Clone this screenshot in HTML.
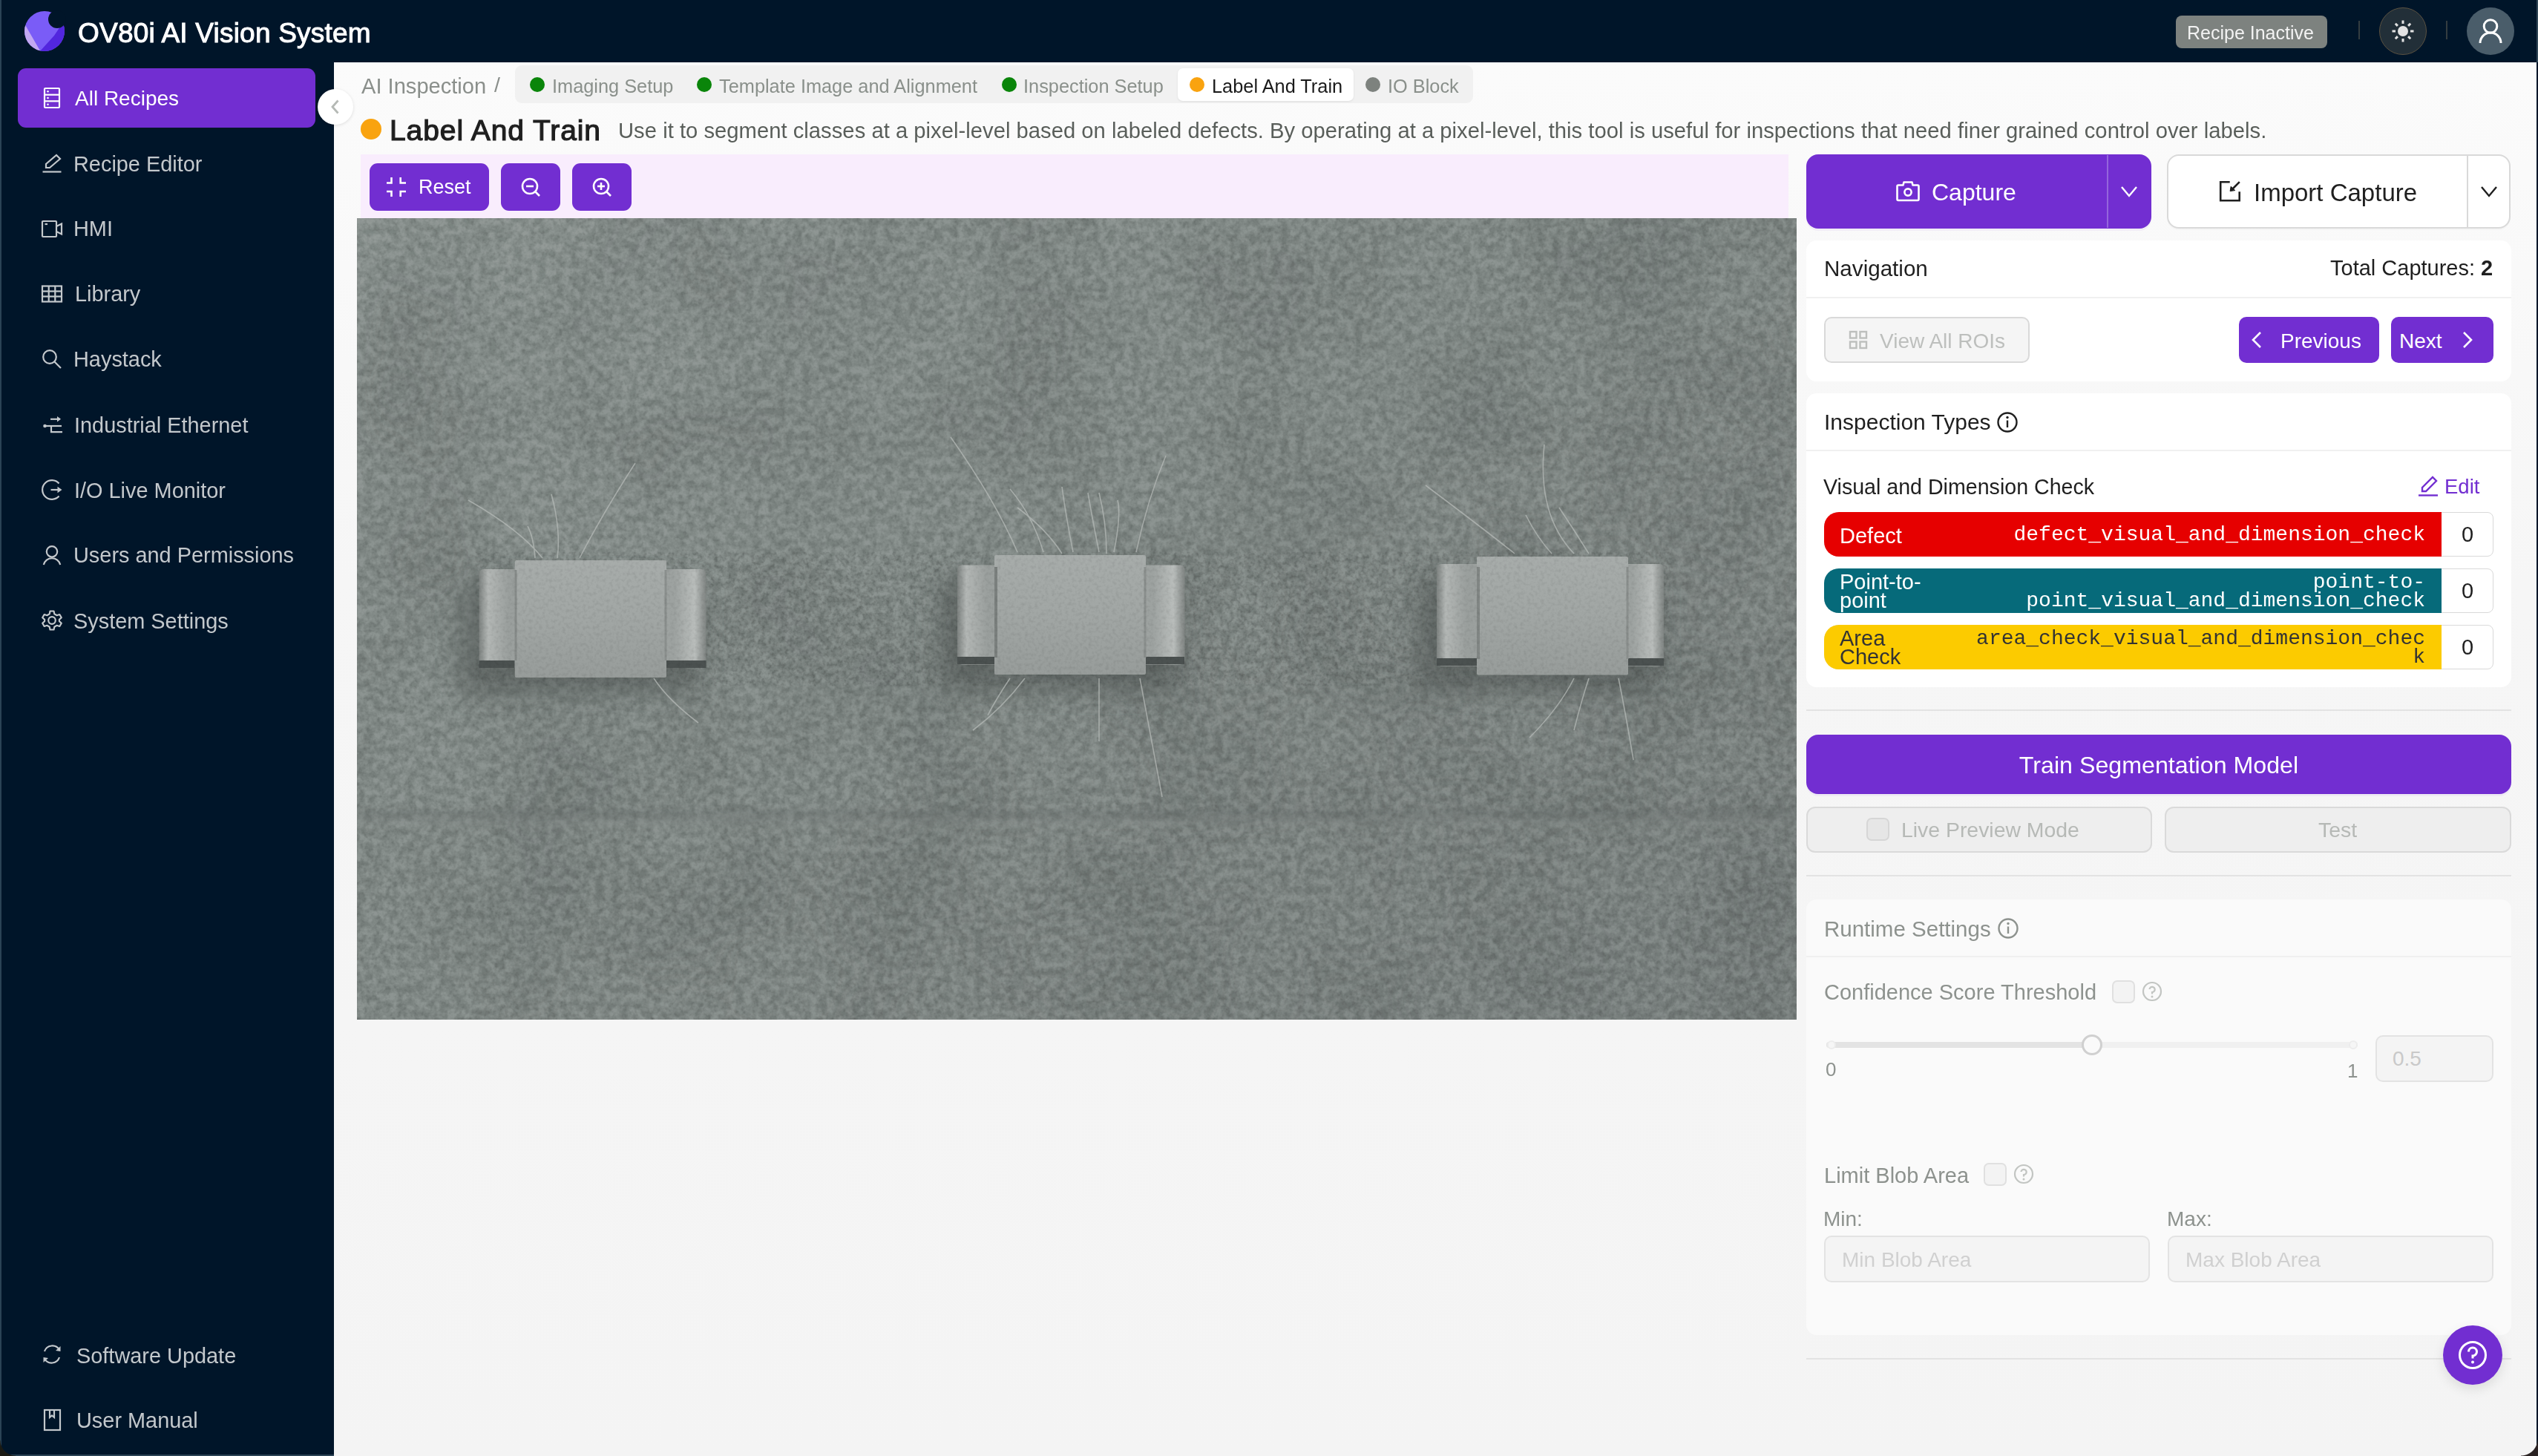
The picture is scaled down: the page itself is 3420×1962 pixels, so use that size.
<!DOCTYPE html>
<html><head><meta charset="utf-8">
<style>
*{margin:0;padding:0;box-sizing:border-box}
html,body{width:3420px;height:1962px;overflow:hidden;background:#001529;font-family:"Liberation Sans",sans-serif}
.a{position:absolute}
.t{position:absolute;line-height:1;white-space:nowrap}
.nav{color:#c3c8cc;font-size:28.9px}
.ic{position:absolute;overflow:visible}
.ic{fill:none;stroke:#c3c8cc;stroke-width:2.2}
.tab{position:absolute;line-height:1;white-space:nowrap;font-size:25.35px;color:#8a908b}
.dot{position:absolute;width:20px;height:20px;border-radius:50%}
.card{position:absolute;background:#fff;border-radius:14px}
.btn{position:absolute;background:#722ed1;border-radius:10px}
.w{color:#fff}
.mono{font-family:"Liberation Mono",monospace}
</style></head><body>
<!-- backgrounds -->
<div class="a" style="left:0;top:0;width:3420px;height:84px;background:#001529"></div>
<div class="a" style="left:0;top:84px;width:450px;height:1878px;background:#001529"></div>
<div class="a" style="left:450px;top:84px;width:2968px;height:1878px;background:linear-gradient(#fbfbfb,#f6f6f6 700px,#f4f4f4)"></div>
<div class="a" style="left:0;top:0;width:2px;height:1962px;background:#2b4355"></div>
<div class="a" style="left:0;top:1960px;width:450px;height:2px;background:#2b4355"></div>
<div class="a" style="left:3418px;top:0;width:2px;height:84px;background:#2f4656"></div>

<!-- header -->
<svg class="ic" style="left:33px;top:14px" width="56" height="56" viewBox="0 0 56 56">
 <defs><clipPath id="lc"><circle cx="27" cy="28" r="27"/></clipPath></defs>
 <g clip-path="url(#lc)" style="stroke:none">
  <rect x="0" y="0" width="56" height="56" style="fill:#7a5cf7;stroke:none"/>
  <polygon points="40,34 56,10 56,56 20,56" style="fill:#5226de;stroke:none"/>
  <polygon points="0,18 22,56 0,56" style="fill:#c3a8f2;stroke:none"/>
 </g>
 <circle cx="44" cy="12" r="12" style="fill:#001529;stroke:none"/>
</svg>
<div class="t" style="left:105px;top:26px;font-size:37px;color:#fff;-webkit-text-stroke:1px #fff;letter-spacing:0.22px">OV80i AI Vision System</div>

<div class="a" style="left:2932px;top:21px;width:204px;height:44px;background:#7d827f;border-radius:8px"></div>
<div class="t" style="left:2947px;top:32px;font-size:25px;color:#f2f2f2">Recipe Inactive</div>
<div class="a" style="left:3178px;top:28px;width:2px;height:25px;background:#343d40"></div>
<div class="a" style="left:3206px;top:10px;width:64px;height:64px;border-radius:50%;background:#222f38;border:1.5px solid #5b5241"></div>
<svg class="ic" style="left:3218px;top:22px" width="40" height="40" viewBox="0 0 40 40">
 <circle cx="20" cy="20" r="7" style="fill:#e3e3e3;stroke:none"/>
 <g style="stroke:#e3e3e3;stroke-width:3">
 <line x1="20" y1="5.5" x2="20" y2="10"/><line x1="20" y1="30" x2="20" y2="34.5"/>
 <line x1="5.5" y1="20" x2="10" y2="20"/><line x1="30" y1="20" x2="34.5" y2="20"/>
 <line x1="9.8" y1="9.8" x2="12.9" y2="12.9"/><line x1="27.1" y1="27.1" x2="30.2" y2="30.2"/>
 <line x1="9.8" y1="30.2" x2="12.9" y2="27.1"/><line x1="27.1" y1="12.9" x2="30.2" y2="9.8"/>
 </g>
</svg>
<div class="a" style="left:3296px;top:28px;width:2px;height:25px;background:#343d40"></div>
<div class="a" style="left:3324px;top:10px;width:64px;height:64px;border-radius:50%;background:#4a5d6a"></div>
<svg class="ic" style="left:3336px;top:22px" width="40" height="40" viewBox="0 0 40 40">
 <circle cx="20" cy="13.5" r="8.8" style="stroke:#fff;stroke-width:3"/>
 <path d="M6 36 A14 14 0 0 1 34 36" style="stroke:#fff;stroke-width:3"/>
</svg>

<!-- sidebar -->
<div class="a" style="left:24px;top:92px;width:401px;height:80px;background:#722ed1;border-radius:11px"></div>
<svg class="ic" style="left:56px;top:118px" width="28" height="28" viewBox="0 0 28 28">
 <g style="stroke:#fff"><rect x="4" y="1" width="20" height="26" rx="1"/><line x1="4" y1="9.7" x2="24" y2="9.7"/><line x1="4" y1="18.3" x2="24" y2="18.3"/></g>
 <g style="fill:#fff;stroke:none"><circle cx="8.5" cy="5.2" r="1.3" style="fill:#fff;stroke:none"/><circle cx="8.5" cy="14" r="1.3" style="fill:#fff;stroke:none"/><circle cx="8.5" cy="22.7" r="1.3" style="fill:#fff;stroke:none"/></g>
</svg>
<div class="t nav" style="left:101px;top:119px;color:#fff;font-size:28px">All Recipes</div>

<svg class="ic" style="left:56px;top:206px" width="28" height="28" viewBox="0 0 28 28">
 <path d="M6 20 L6 15 L20 3 L25 8 L11 20 Z"/><line x1="1.5" y1="25.5" x2="26.5" y2="25.5"/>
</svg>
<div class="t nav" style="left:99px;top:207px">Recipe Editor</div>

<svg class="ic" style="left:56px;top:294px" width="28" height="28" viewBox="0 0 28 28">
 <rect x="1" y="4" width="19" height="21" rx="1"/><path d="M20 11 L27 7.5 L27 21.5 L20 18"/><line x1="4.5" y1="8" x2="8" y2="8"/>
</svg>
<div class="t nav" style="left:99px;top:294px">HMI</div>

<svg class="ic" style="left:56px;top:382px" width="28" height="28" viewBox="0 0 28 28">
 <rect x="1" y="3.5" width="26" height="21"/><line x1="1" y1="10.5" x2="27" y2="10.5"/><line x1="1" y1="17.5" x2="27" y2="17.5"/><line x1="9.7" y1="3.5" x2="9.7" y2="24.5"/><line x1="18.3" y1="3.5" x2="18.3" y2="24.5"/>
</svg>
<div class="t nav" style="left:101px;top:382px">Library</div>

<svg class="ic" style="left:56px;top:470px" width="28" height="28" viewBox="0 0 28 28">
 <circle cx="11" cy="11" r="8.8"/><line x1="17.5" y1="17.5" x2="26" y2="26"/>
</svg>
<div class="t nav" style="left:99px;top:470px">Haystack</div>

<svg class="ic" style="left:56px;top:558px" width="28" height="28" viewBox="0 0 28 28">
 <circle cx="4.5" cy="16" r="2.3" style="fill:#c3c8cc;stroke:none"/><line x1="4.5" y1="16" x2="27" y2="16"/>
 <line x1="12" y1="6.8" x2="25" y2="6.8"/><path d="M21 3 L26 6.8 L21 10.6 Z" style="fill:#c3c8cc;stroke:none"/>
 <path d="M13 16 L13 24.2 L28 24.2"/>
</svg>
<div class="t nav" style="left:100px;top:559px">Industrial Ethernet</div>

<svg class="ic" style="left:56px;top:646px" width="28" height="28" viewBox="0 0 28 28">
 <path d="M23.5 5.5 A12.8 12.8 0 1 0 23.5 22.5"/><line x1="12.5" y1="14" x2="25" y2="14"/><path d="M21.5 9.8 L27.5 14 L21.5 18.2 Z" style="fill:#c3c8cc;stroke:none"/>
</svg>
<div class="t nav" style="left:100px;top:647px">I/O Live Monitor</div>

<svg class="ic" style="left:56px;top:734px" width="28" height="28" viewBox="0 0 28 28">
 <circle cx="14" cy="9.3" r="7.2"/><path d="M2.8 27 A11.5 11.5 0 0 1 25.2 27"/>
</svg>
<div class="t nav" style="left:99px;top:734px">Users and Permissions</div>

<svg class="ic" style="left:56px;top:822px" width="28" height="28" viewBox="0 0 28 28">
 <path d="M11.5 1.5 L16.5 1.5 L17.3 5.3 L20.6 7.2 L24.3 6 L26.8 10.3 L23.9 12.9 L23.9 15.1 L26.8 17.7 L24.3 22 L20.6 20.8 L17.3 22.7 L16.5 26.5 L11.5 26.5 L10.7 22.7 L7.4 20.8 L3.7 22 L1.2 17.7 L4.1 15.1 L4.1 12.9 L1.2 10.3 L3.7 6 L7.4 7.2 L10.7 5.3 Z" style="stroke-linejoin:round"/><circle cx="14" cy="14" r="4.8"/>
</svg>
<div class="t nav" style="left:99px;top:823px">System Settings</div>

<svg class="ic" style="left:56px;top:1811px" width="28" height="28" viewBox="0 0 28 28">
 <path d="M4 10 A11 11 0 0 1 24 8"/><path d="M24 18 A11 11 0 0 1 4 20"/>
 <path d="M25.5 3 L25.5 10 L19 9 Z" style="fill:#c3c8cc;stroke:none"/><path d="M2.5 25 L2.5 18 L9 19 Z" style="fill:#c3c8cc;stroke:none"/>
</svg>
<div class="t nav" style="left:103px;top:1813px">Software Update</div>

<svg class="ic" style="left:56px;top:1899px" width="28" height="28" viewBox="0 0 28 28">
 <rect x="4" y="1" width="21" height="27"/><path d="M11 1 L11 11 L14 8.5 L17 11 L17 1"/>
</svg>
<div class="t nav" style="left:103px;top:1900px">User Manual</div>
<!-- breadcrumb -->
<div class="t" style="left:487px;top:101.5px;font-size:29.1px;color:#8a8f8b">AI Inspection</div>
<div class="t" style="left:666px;top:100px;font-size:28.5px;color:#8a8f8b">/</div>
<div class="a" style="left:694px;top:88px;width:1291px;height:51px;background:#f1f1f1;border-radius:9px"></div>
<div class="dot" style="left:714px;top:104px;background:#0a850a"></div>
<div class="tab" style="left:744px;top:103.5px">Imaging Setup</div>
<div class="dot" style="left:939px;top:104px;background:#0a850a"></div>
<div class="tab" style="left:969px;top:103.5px">Template Image and Alignment</div>
<div class="dot" style="left:1350px;top:104px;background:#0a850a"></div>
<div class="tab" style="left:1379px;top:103.5px">Inspection Setup</div>
<div class="a" style="left:1587px;top:92px;width:237px;height:44px;background:#fff;border-radius:7px;box-shadow:0 1px 3px rgba(0,0,0,0.08)"></div>
<div class="dot" style="left:1603px;top:104px;background:#f9a30f"></div>
<div class="tab" style="left:1633px;top:103.5px;color:#1a1a1a">Label And Train</div>
<div class="dot" style="left:1840px;top:104px;background:#7d827e"></div>
<div class="tab" style="left:1870px;top:103.5px">IO Block</div>

<!-- collapse button -->
<div class="a" style="left:428px;top:120px;width:48px;height:48px;border-radius:50%;background:#fff;box-shadow:0 1px 4px rgba(0,0,0,0.12)"></div>
<svg class="ic" style="left:440px;top:132px" width="24" height="24" viewBox="0 0 24 24"><path d="M15.5 3.5 L8 12 L15.5 20.5" style="stroke:#b5b9b5;stroke-width:2.8"/></svg>

<!-- title -->
<div class="a" style="left:486px;top:160px;width:28px;height:28px;border-radius:50%;background:#f9a30f"></div>
<div class="t" style="left:525px;top:156px;font-size:39px;color:#1f1f1f;-webkit-text-stroke:1.2px #1f1f1f;letter-spacing:0.93px">Label And Train</div>
<div class="t" style="left:833px;top:161.5px;font-size:29.2px;color:#595e5a;letter-spacing:0.028px">Use it to segment classes at a pixel-level based on labeled defects. By operating at a pixel-level, this tool is useful for inspections that need finer grained control over labels.</div>

<!-- toolbar -->
<div class="a" style="left:486px;top:208px;width:1924px;height:86px;background:#f9edfd"></div>
<div class="btn" style="left:498px;top:220px;width:161px;height:64px;border-radius:11px"></div>
<svg class="ic" style="left:520px;top:239px" width="28" height="28" viewBox="0 0 28 28">
 <g style="stroke:#fff;stroke-width:2.6"><path d="M7.5 0 L7.5 7.5 L1 7.5"/><path d="M19.7 0 L19.7 7.5 L27 7.5"/><path d="M7.5 26 L7.5 19 L1 19"/><path d="M19.7 26 L19.7 19 L27 19"/></g>
</svg>
<div class="t w" style="left:564px;top:239px;font-size:27px">Reset</div>
<div class="btn" style="left:675px;top:220px;width:80px;height:64px;border-radius:11px"></div>
<svg class="ic" style="left:701px;top:238px" width="28" height="28" viewBox="0 0 28 28">
 <g style="stroke:#fff;stroke-width:2.6"><circle cx="13" cy="13" r="10"/><line x1="20.5" y1="20.5" x2="26" y2="26"/><line x1="8" y1="13" x2="18" y2="13"/></g>
</svg>
<div class="btn" style="left:771px;top:220px;width:80px;height:64px;border-radius:11px"></div>
<svg class="ic" style="left:797px;top:238px" width="28" height="28" viewBox="0 0 28 28">
 <g style="stroke:#fff;stroke-width:2.6"><circle cx="13" cy="13" r="10"/><line x1="20.5" y1="20.5" x2="26" y2="26"/><line x1="8" y1="13" x2="18" y2="13"/><line x1="13" y1="8" x2="13" y2="18"/></g>
</svg>
<!-- image -->
<svg class="a" style="left:481px;top:294px" width="1940" height="1080" viewBox="0 0 1940 1080">
 <defs>
  <linearGradient id="bgG" x1="0" y1="0" x2="1" y2="1">
   <stop offset="0" stop-color="#89918e"/><stop offset="0.45" stop-color="#828a87"/><stop offset="1" stop-color="#79807e"/>
  </linearGradient>
  <filter id="nzf" x="0" y="0" width="100%" height="100%">
   <feTurbulence type="fractalNoise" baseFrequency="0.22" numOctaves="2" seed="3"/>
   <feColorMatrix type="matrix" values="0 0 0 0 0  0 0 0 0 0  0 0 0 0 0  0 0 0 -2.2 1.25"/>
  </filter>
  <filter id="nzo" x="0" y="0" width="100%" height="100%" color-interpolation-filters="sRGB">
   <feTurbulence type="fractalNoise" baseFrequency="0.09" numOctaves="3" seed="5"/>
   <feColorMatrix type="matrix" values="1 0 0 0 0  1 0 0 0 0  1 0 0 0 0  0 0 0 0 1"/>
   <feComponentTransfer><feFuncR type="linear" slope="2.6" intercept="-0.8"/><feFuncG type="linear" slope="2.6" intercept="-0.8"/><feFuncB type="linear" slope="2.6" intercept="-0.8"/></feComponentTransfer>
  </filter>
  <filter id="nzm" x="0" y="0" width="100%" height="100%">
   <feTurbulence type="fractalNoise" baseFrequency="0.006" numOctaves="2" seed="11"/>
   <feColorMatrix type="matrix" values="0 0 0 0 0  0 0 0 0 0  0 0 0 0 0  0 0 0 -1.5 0.9"/>
  </filter>
  <linearGradient id="flG" x1="0" y1="0" x2="1" y2="0">
   <stop offset="0" stop-color="#7d8280"/><stop offset="0.04" stop-color="#b3b7b5"/><stop offset="0.13" stop-color="#9a9f9d"/>
   <stop offset="0.5" stop-color="#a2a7a5"/><stop offset="0.86" stop-color="#9da2a0"/><stop offset="0.95" stop-color="#b9bdbb"/><stop offset="1" stop-color="#7f8482"/>
  </linearGradient>
  <linearGradient id="bdG" x1="0" y1="0" x2="0" y2="1">
   <stop offset="0" stop-color="#a7acaa"/><stop offset="0.5" stop-color="#a1a6a4"/><stop offset="1" stop-color="#979c9a"/>
  </linearGradient>
  <filter id="bl" x="-20%" y="-20%" width="140%" height="140%"><feGaussianBlur stdDeviation="18"/></filter>
  <filter id="bl2" x="-5%" y="-50%" width="110%" height="200%"><feGaussianBlur stdDeviation="6"/></filter>
 </defs>
 <rect width="1940" height="1080" fill="url(#bgG)"/>
 <rect width="1940" height="1080" fill="#5a6260" filter="url(#nzm)" opacity="0.12"/>
 <rect width="1940" height="1080" fill="#3a403e" filter="url(#nzf)" opacity="0.10"/>
 <rect width="1940" height="1080" filter="url(#nzo)" opacity="0.09" style="mix-blend-mode:overlay"/>
 <g filter="url(#bl2)" opacity="0.5">
  <rect x="0" y="800" width="1940" height="8" fill="#5d6462"/>
  <rect x="0" y="812" width="1940" height="6" fill="#8a918e"/>
 </g>
 <g opacity="0.6" filter="url(#bl)">
  <rect x="140" y="490" width="320" height="150" rx="10" fill="#4d5351"/>
  <rect x="785" y="485" width="320" height="150" rx="10" fill="#4d5351"/>
  <rect x="1430" y="485" width="320" height="150" rx="10" fill="#4d5351"/>
 </g>
 <g>
  <rect x="164.5" y="473" width="306" height="133" rx="6" fill="url(#flG)"/>
  <rect x="212.8" y="461" width="204.2" height="158" rx="2" fill="url(#bdG)"/>
  <rect x="164.5" y="596" width="48" height="10" fill="#4b5150"/>
  <rect x="417" y="596" width="53.6" height="10" fill="#4b5150"/>
  <line x1="214" y1="474" x2="214" y2="596" stroke="#868b89" stroke-width="3"/>
  <line x1="416" y1="474" x2="416" y2="596" stroke="#8a8f8d" stroke-width="3"/>
 </g>
 <g>
  <rect x="809" y="467.6" width="306.6" height="134" rx="6" fill="url(#flG)"/>
  <rect x="859" y="454" width="204" height="161" rx="2" fill="url(#bdG)"/>
  <rect x="809" y="591" width="50" height="10" fill="#4b5150"/>
  <rect x="1063" y="591" width="52" height="10" fill="#4b5150"/>
  <line x1="861" y1="470" x2="861" y2="592" stroke="#7b807e" stroke-width="4"/>
  <line x1="1062" y1="470" x2="1062" y2="592" stroke="#8a8f8d" stroke-width="3"/>
 </g>
 <g>
  <rect x="1455" y="466" width="306" height="137.6" rx="6" fill="url(#flG)"/>
  <rect x="1509" y="456" width="204" height="159.6" rx="2" fill="url(#bdG)"/>
  <rect x="1455" y="593" width="54" height="10" fill="#4b5150"/>
  <rect x="1713" y="593" width="48" height="10" fill="#4b5150"/>
  <line x1="1511" y1="470" x2="1511" y2="594" stroke="#818684" stroke-width="4"/>
  <line x1="1712" y1="470" x2="1712" y2="594" stroke="#8a8f8d" stroke-width="3"/>
 </g>
 <rect x="160" y="450" width="1610" height="180" fill="#000" filter="url(#nzf)" opacity="0.07"/>
 <g stroke="#b5bab7" stroke-width="1.6" fill="none" opacity="0.75">
  <path d="M250 458 Q 220 420 150 380"/><path d="M270 458 Q 275 420 262 372"/><path d="M300 458 Q 330 400 375 330"/><path d="M240 458 Q 238 430 230 415"/>
  <path d="M890 450 Q 860 380 800 295"/><path d="M925 450 Q 910 400 880 365"/><path d="M965 450 Q 955 400 950 362"/><path d="M1000 450 Q 990 400 985 370"/><path d="M1020 450 Q 1030 400 1025 380"/><path d="M1050 450 Q 1065 380 1090 320"/>
  <path d="M950 452 Q 930 420 890 390"/><path d="M1010 452 Q 1010 410 1000 370"/>
  <path d="M1560 452 Q 1520 420 1440 360"/><path d="M1640 452 Q 1590 400 1600 305"/><path d="M1610 452 Q 1590 430 1575 400"/><path d="M1660 452 Q 1640 420 1620 390"/>
  <path d="M400 620 Q 420 650 460 680"/><path d="M900 620 Q 870 660 830 690"/><path d="M880 620 Q 860 650 850 670"/><path d="M1000 620 Q 1000 660 1000 705"/><path d="M1055 620 Q 1070 700 1085 780"/>
  <path d="M1640 620 Q 1620 660 1580 700"/><path d="M1660 620 Q 1650 650 1640 690"/><path d="M1700 620 Q 1710 670 1720 730"/>
 </g>
</svg>
<!-- capture buttons -->
<div class="a" style="left:2434px;top:208px;width:465px;height:100px;background:#722ed1;border-radius:16px;box-shadow:0 3px 0 rgba(114,46,209,0.06)"></div>
<div class="a" style="left:2839px;top:209px;width:2px;height:98px;background:#9466dc"></div>
<svg class="ic" style="left:2553px;top:241px" width="36" height="32" viewBox="0 0 36 32">
 <g style="stroke:#fff;stroke-width:2.6;stroke-linejoin:round"><path d="M5 8.5 L11.5 8.5 L12.5 4.5 L23.5 4.5 L24.5 8.5 L31 8.5 Q32.5 8.5 32.5 10 L32.5 27.5 Q32.5 29 31 29 L5 29 Q3.5 29 3.5 27.5 L3.5 10 Q3.5 8.5 5 8.5 Z"/><circle cx="18" cy="18" r="4.6"/></g>
</svg>
<div class="t w" style="left:2603px;top:243px;font-size:32px">Capture</div>
<svg class="ic" style="left:2857px;top:246px" width="24" height="24" viewBox="0 0 24 24"><path d="M2 6 L12 18 L22 6" style="stroke:#fff;stroke-width:2.4"/></svg>

<div class="a" style="left:2920px;top:208px;width:463px;height:100px;background:#fff;border:2px solid #d9d9d9;border-radius:16px;box-shadow:0 2px 0 rgba(0,0,0,0.02)"></div>
<div class="a" style="left:3324px;top:210px;width:2px;height:96px;background:#d9d9d9"></div>
<svg class="ic" style="left:2988px;top:241px" width="34" height="34" viewBox="0 0 34 34">
 <g style="stroke:#1f1f1f;stroke-width:2.6"><path d="M16.7 4.2 L4.2 4.2 L4.2 29.2 L29.7 29.2 L29.7 17.2"/><path d="M29.8 4.2 L20 14"/></g><path d="M17.1 16.6 L18.2 10.2 L23.8 15.6 Z" style="fill:#1f1f1f;stroke:#1f1f1f;stroke-width:1;stroke-linejoin:round"/>
</svg>
<div class="t" style="left:3037px;top:243px;font-size:33px;color:#1f1f1f">Import Capture</div>
<svg class="ic" style="left:3342px;top:246px" width="24" height="24" viewBox="0 0 24 24"><path d="M2 6 L12 18 L22 6" style="stroke:#1f1f1f;stroke-width:2.4"/></svg>

<!-- navigation card -->
<div class="card" style="left:2434px;top:324px;width:950px;height:190px"></div>
<div class="a" style="left:2434px;top:400px;width:950px;height:2px;background:#f0f0f0"></div>
<div class="t" style="left:2458px;top:347px;font-size:29.6px;color:#1f1f1f">Navigation</div>
<div class="t" style="left:3140px;top:347px;font-size:29px;color:#1f1f1f">Total Captures: <b>2</b></div>
<div class="a" style="left:2458px;top:427px;width:277px;height:62px;background:#f5f5f5;border:2px solid #d9d9d9;border-radius:10px"></div>
<svg class="ic" style="left:2490px;top:444px" width="28" height="28" viewBox="0 0 28 28">
 <g style="stroke:#bdbfbd;stroke-width:2.4"><rect x="3" y="3" width="8.5" height="8.5"/><rect x="16.5" y="3" width="8.5" height="8.5"/><rect x="3" y="16.5" width="8.5" height="8.5"/><rect x="16.5" y="16.5" width="8.5" height="8.5"/></g>
</svg>
<div class="t" style="left:2533px;top:446px;font-size:28px;color:#bdbfbd">View All ROIs</div>
<div class="btn" style="left:3017px;top:427px;width:189px;height:62px"></div>
<svg class="ic" style="left:3030px;top:446px" width="24" height="24" viewBox="0 0 24 24"><path d="M16 2 L6 12 L16 22" style="stroke:#fff;stroke-width:2.6"/></svg>
<div class="t w" style="left:3073px;top:446px;font-size:28px">Previous</div>
<div class="btn" style="left:3222px;top:427px;width:138px;height:62px"></div>
<div class="t w" style="left:3233px;top:446px;font-size:28px">Next</div>
<svg class="ic" style="left:3312px;top:446px" width="24" height="24" viewBox="0 0 24 24"><path d="M8 2 L18 12 L8 22" style="stroke:#fff;stroke-width:2.6"/></svg>

<!-- inspection types card -->
<div class="card" style="left:2434px;top:530px;width:950px;height:396px"></div>
<div class="a" style="left:2434px;top:606px;width:950px;height:2px;background:#f0f0f0"></div>
<div class="t" style="left:2458px;top:554px;font-size:30px;color:#1f1f1f">Inspection Types</div>
<svg class="ic" style="left:2690px;top:554px" width="30" height="30" viewBox="0 0 30 30">
 <g style="stroke:#1f1f1f;stroke-width:2.4"><circle cx="15" cy="15" r="12.5"/><line x1="15" y1="12.5" x2="15" y2="22"/></g><circle cx="15" cy="8.5" r="1.7" style="fill:#1f1f1f;stroke:none"/>
</svg>
<div class="t" style="left:2457px;top:641.5px;font-size:28.6px;color:#1f1f1f">Visual and Dimension Check</div>
<svg class="ic" style="left:3258px;top:640px" width="30" height="30" viewBox="0 0 30 30">
 <g style="stroke:#722ed1;stroke-width:2.4"><path d="M6 22 L6 17 L20 3 L25 8 L11 22 Z"/><line x1="1" y1="27.5" x2="27" y2="27.5"/></g>
</svg>
<div class="t" style="left:3294px;top:642px;font-size:27.5px;color:#722ed1">Edit</div>

<div class="a" style="left:2458px;top:690px;width:902px;height:60px;background:#fff;border:1.5px solid #d9d9d9;border-radius:20px 8px 8px 20px"></div>
<div class="a" style="left:2458px;top:690px;width:832px;height:60px;background:#e60000;border-radius:20px 0 0 20px"></div>
<div class="t w" style="left:2479px;top:707.5px;font-size:29px">Defect</div>
<div class="t w mono" style="left:2713px;top:707px;font-size:28px;width:555px;text-align:right">defect_visual_and_dimension_check</div>
<div class="t" style="left:3290px;top:706px;width:70px;text-align:center;font-size:29px;color:#1f1f1f">0</div>

<div class="a" style="left:2458px;top:766px;width:902px;height:60px;background:#fff;border:1.5px solid #d9d9d9;border-radius:20px 8px 8px 20px"></div>
<div class="a" style="left:2458px;top:766px;width:832px;height:60px;background:#066a7a;border-radius:20px 0 0 20px"></div>
<div class="a w" style="left:2479px;top:772px;font-size:29px;line-height:25px;white-space:nowrap">Point-to-<br>point</div>
<div class="a w mono" style="left:2600px;top:772px;font-size:28px;line-height:25px;width:668px;text-align:right;white-space:nowrap">point-to-<br>point_visual_and_dimension_check</div>
<div class="t" style="left:3290px;top:782px;width:70px;text-align:center;font-size:29px;color:#1f1f1f">0</div>

<div class="a" style="left:2458px;top:842px;width:902px;height:60px;background:#fff;border:1.5px solid #d9d9d9;border-radius:20px 8px 8px 20px"></div>
<div class="a" style="left:2458px;top:842px;width:832px;height:60px;background:#fccb00;border-radius:20px 0 0 20px"></div>
<div class="a" style="left:2479px;top:848px;font-size:29px;line-height:25px;white-space:nowrap;color:#333">Area<br>Check</div>
<div class="a mono" style="left:2600px;top:848px;font-size:28px;line-height:25px;width:668px;text-align:right;white-space:nowrap;color:#333">area_check_visual_and_dimension_chec<br>k</div>
<div class="t" style="left:3290px;top:858px;width:70px;text-align:center;font-size:29px;color:#1f1f1f">0</div>

<div class="a" style="left:2434px;top:956px;width:950px;height:2px;background:#e3e3e3"></div>

<!-- train -->
<div class="a" style="left:2434px;top:990px;width:950px;height:80px;background:#722ed1;border-radius:16px;box-shadow:0 3px 0 rgba(114,46,209,0.05)"></div>
<div class="t w" style="left:2434px;top:1015px;width:950px;text-align:center;font-size:32.2px">Train Segmentation Model</div>
<div class="a" style="left:2434px;top:1087px;width:466px;height:62px;background:#eeeeee;border:2px solid #dadada;border-radius:12px"></div>
<div class="a" style="left:2515px;top:1102px;width:31px;height:31px;background:#e6e6e6;border:2px solid #d6d6d6;border-radius:7px"></div>
<div class="t" style="left:2562px;top:1104px;font-size:28.4px;color:#b6b9b6">Live Preview Mode</div>
<div class="a" style="left:2917px;top:1087px;width:467px;height:62px;background:#eeeeee;border:2px solid #dadada;border-radius:12px"></div>
<div class="t" style="left:3124px;top:1104px;font-size:28.4px;color:#b6b9b6">Test</div>
<div class="a" style="left:2434px;top:1179px;width:950px;height:2px;background:#e3e3e3"></div>

<!-- runtime settings -->
<div class="card" style="left:2434px;top:1212px;width:950px;height:587px;background:#fafafa"></div>
<div class="a" style="left:2434px;top:1288px;width:950px;height:2px;background:#f0f0f0"></div>
<div class="t" style="left:2458px;top:1236.5px;font-size:29.5px;color:#8d928e">Runtime Settings</div>
<svg class="ic" style="left:2691px;top:1236px" width="30" height="30" viewBox="0 0 30 30">
 <g style="stroke:#8d928e;stroke-width:2.4"><circle cx="15" cy="15" r="12.5"/><line x1="15" y1="12.5" x2="15" y2="22"/></g><circle cx="15" cy="8.5" r="1.7" style="fill:#8d928e;stroke:none"/>
</svg>
<div class="t" style="left:2458px;top:1322.5px;font-size:29px;color:#8d928e">Confidence Score Threshold</div>
<div class="a" style="left:2846px;top:1321px;width:31px;height:31px;background:#f3f3f3;border:2px solid #e0e0e0;border-radius:7px"></div>
<svg class="ic" style="left:2886px;top:1322px" width="28" height="28" viewBox="0 0 28 28">
 <g style="stroke:#c2c5c2;stroke-width:2.2"><circle cx="14" cy="14" r="12"/><path d="M10.5 11 A3.6 3.6 0 1 1 14 15 L14 17.5"/></g><circle cx="14" cy="21" r="1.5" style="fill:#c2c5c2;stroke:none"/>
</svg>
<div class="a" style="left:2461px;top:1404px;width:716px;height:8px;background:#f0f0f0;border-radius:4px"></div>
<div class="a" style="left:2461px;top:1404px;width:358px;height:8px;background:#e3e3e3;border-radius:4px"></div>
<div class="a" style="left:2462px;top:1402px;width:12px;height:12px;background:#f6f6f6;border:2px solid #ececec;border-radius:50%"></div>
<div class="a" style="left:3165px;top:1402px;width:12px;height:12px;background:#f6f6f6;border:2px solid #ececec;border-radius:50%"></div>
<div class="a" style="left:2805px;top:1394px;width:28px;height:28px;background:#fafafa;border:3.5px solid #d0d0d0;border-radius:50%"></div>
<div class="t" style="left:2460px;top:1428px;font-size:26px;color:#8d928e">0</div>
<div class="t" style="left:3163px;top:1430px;font-size:26px;color:#8d928e">1</div>
<div class="a" style="left:3201px;top:1395px;width:159px;height:63px;background:#f4f4f4;border:2px solid #e3e3e3;border-radius:10px"></div>
<div class="t" style="left:3224px;top:1413px;font-size:28px;color:#c9c9c9">0.5</div>

<div class="t" style="left:2458px;top:1569.5px;font-size:29px;color:#8d928e">Limit Blob Area</div>
<div class="a" style="left:2673px;top:1567px;width:31px;height:31px;background:#f3f3f3;border:2px solid #e0e0e0;border-radius:7px"></div>
<svg class="ic" style="left:2713px;top:1568px" width="28" height="28" viewBox="0 0 28 28">
 <g style="stroke:#c2c5c2;stroke-width:2.2"><circle cx="14" cy="14" r="12"/><path d="M10.5 11 A3.6 3.6 0 1 1 14 15 L14 17.5"/></g><circle cx="14" cy="21" r="1.5" style="fill:#c2c5c2;stroke:none"/>
</svg>
<div class="t" style="left:2457px;top:1629px;font-size:28px;color:#8d928e">Min:</div>
<div class="t" style="left:2920px;top:1629px;font-size:28px;color:#8d928e">Max:</div>
<div class="a" style="left:2458px;top:1665px;width:439px;height:63px;background:#f4f4f4;border:2px solid #e3e3e3;border-radius:10px"></div>
<div class="t" style="left:2482px;top:1684px;font-size:28px;color:#d0d0d0">Min Blob Area</div>
<div class="a" style="left:2921px;top:1665px;width:439px;height:63px;background:#f4f4f4;border:2px solid #e3e3e3;border-radius:10px"></div>
<div class="t" style="left:2945px;top:1684px;font-size:28px;color:#d0d0d0">Max Blob Area</div>

<div class="a" style="left:2434px;top:1830px;width:950px;height:2px;background:#e3e3e3"></div>

<!-- help float -->
<div class="a" style="left:3292px;top:1786px;width:80px;height:80px;border-radius:50%;background:#722ed1;box-shadow:0 6px 16px rgba(0,0,0,0.10)"></div>
<svg class="ic" style="left:3310px;top:1804px" width="44" height="44" viewBox="0 0 44 44">
 <g style="stroke:#fff;stroke-width:3"><circle cx="22" cy="22" r="17.5"/><path d="M16.5 17.5 A5.5 5.5 0 1 1 22 23 L22 26.5"/></g><circle cx="22" cy="31.5" r="2" style="fill:#fff;stroke:none"/>
</svg>

<!-- window corners -->
<div class="a" style="left:3397px;top:1939px;width:23px;height:23px;background:radial-gradient(circle at 0 0,transparent 22px,#2a2222 23px)"></div>
<div class="a" style="left:0;top:1941px;width:21px;height:21px;background:radial-gradient(circle at 100% 0,transparent 20px,#1a1a14 21px)"></div>
</body></html>
